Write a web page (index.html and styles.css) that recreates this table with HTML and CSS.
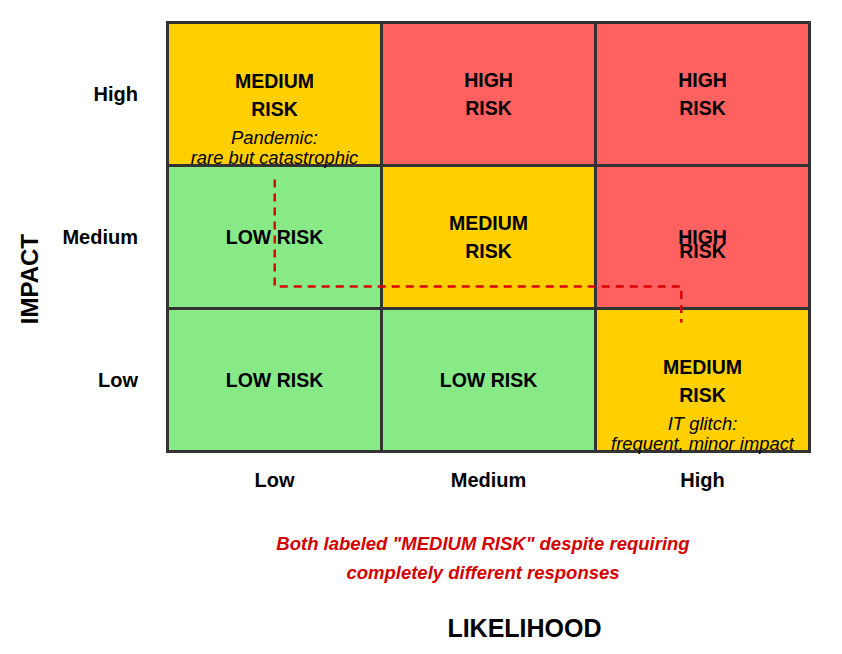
FILE: index.html
```html
<!DOCTYPE html>
<html lang="en">
<head>
<meta charset="utf-8">
<title>Risk Matrix</title>
<link rel="stylesheet" href="styles.css">
</head>
<body>
<div class="page">
  <div class="chart">
    <div class="y-axis"><div class="y-title">IMPACT</div></div>
    <div class="y-labels">
      <div class="y-label">High</div>
      <div class="y-label">Medium</div>
      <div class="y-label">Low</div>
    </div>
    <div class="matrix">
      <div class="cell cell--medium cell--noted">
        <div class="risk">MEDIUM<br>RISK</div>
        <div class="note">Pandemic:<br>rare but catastrophic</div>
      </div>
      <div class="cell cell--high"><div class="risk">HIGH<br>RISK</div></div>
      <div class="cell cell--high"><div class="risk">HIGH<br>RISK</div></div>

      <div class="cell cell--low"><div class="risk">LOW RISK</div></div>
      <div class="cell cell--medium"><div class="risk">MEDIUM<br>RISK</div></div>
      <div class="cell cell--high cell--cramped"><div class="risk">HIGH<br>RISK</div></div>

      <div class="cell cell--low"><div class="risk">LOW RISK</div></div>
      <div class="cell cell--low"><div class="risk">LOW RISK</div></div>
      <div class="cell cell--medium cell--noted">
        <div class="risk">MEDIUM<br>RISK</div>
        <div class="note">IT glitch:<br>frequent, minor impact</div>
      </div>

      <svg class="path-overlay" width="645" height="432" viewBox="0 0 645 432">
        <path d="M108.7 158.5 V265.5 H515.3 V301.5" fill="none" stroke="#d80000" stroke-width="2.4" stroke-dasharray="8 6"/>
      </svg>
    </div>
  </div>
  <div class="x-labels">
    <div class="x-label">Low</div>
    <div class="x-label">Medium</div>
    <div class="x-label">High</div>
  </div>
  <p class="callout">Both labeled "MEDIUM RISK" despite requiring<br>completely different responses</p>
  <div class="x-title">LIKELIHOOD</div>
</div>
</body>
</html>
```

FILE: styles.css
```css
* {
  box-sizing: border-box;
}

html, body {
  margin: 0;
  padding: 0;
  background: #ffffff;
}

body {
  font-family: "Liberation Sans", Arial, sans-serif;
  color: #000000;
  width: 842px;
}

.chart {
  display: flex;
  padding-top: 21px;
}

.y-axis {
  width: 60px;
  padding-left: 15px;
  padding-top: 213px;
  display: flex;
  align-items: flex-start;
}

.y-title {
  writing-mode: vertical-rl;
  transform: rotate(180deg);
  font-size: 24px;
  line-height: 30px;
  font-weight: bold;
}

.y-labels {
  width: 78px;
  margin-right: 28px;
  padding: 3px 0;
  display: flex;
  flex-direction: column;
  gap: 3px;
}

.y-label {
  height: 140px;
  display: flex;
  align-items: center;
  justify-content: flex-end;
  font-size: 20px;
  font-weight: bold;
}

.matrix {
  position: relative;
  display: grid;
  grid-template-columns: repeat(3, 211px);
  grid-template-rows: repeat(3, 140px);
  gap: 3px;
  padding: 3px;
  background: #333333;
}

.cell {
  display: flex;
  flex-direction: column;
  align-items: center;
  justify-content: center;
  text-align: center;
}

.cell--medium { background: #ffcf00; }
.cell--high { background: #ff6161; }
.cell--low { background: #87ea87; }

.risk {
  font-size: 19.5px;
  line-height: 28.5px;
  font-weight: bold;
}

.cell--noted {
  justify-content: flex-start;
  padding-top: 42.5px;
}

.cell--cramped .risk {
  line-height: 14px;
  margin-top: 14px;
}

.note {
  position: relative;
  z-index: 1;
  margin-top: 4px;
  font-size: 18.4px;
  line-height: 20px;
  font-style: italic;
  white-space: nowrap;
}

.path-overlay {
  position: absolute;
  left: 0;
  top: 0;
  z-index: 2;
  pointer-events: none;
}

.x-labels {
  margin-left: 166px;
  margin-top: 15px;
  padding: 0 3px;
  width: 645px;
  display: grid;
  grid-template-columns: repeat(3, 211px);
  column-gap: 3px;
}

.x-label {
  text-align: center;
  font-size: 20px;
  line-height: 24px;
  font-weight: bold;
}

.callout {
  margin: 38px 0 0;
  padding-left: 124px;
  text-align: center;
  font-size: 18.5px;
  line-height: 28.6px;
  font-weight: bold;
  font-style: italic;
  color: #d40000;
}

.x-title {
  margin-top: 26px;
  padding-left: 207px;
  text-align: center;
  font-size: 25px;
  line-height: 30px;
  font-weight: bold;
}
```
